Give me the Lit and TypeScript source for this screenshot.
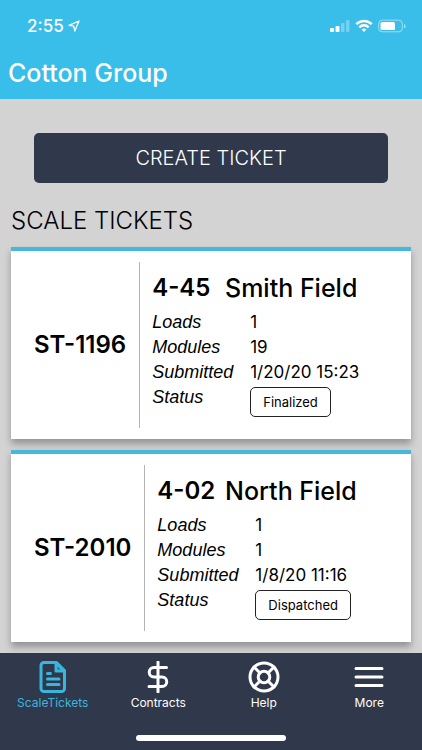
import { LitElement, html, svg, css } from "lit";
import { customElement, property } from "lit/decorators.js";
import { classMap } from "lit/directives/class-map.js";

interface Ticket {
  id: string;
  code: string;
  field: string;
  loads: number;
  modules: number;
  submitted: string;
  status: string;
}

const tickets: Ticket[] = [
  { id: "ST-1196", code: "4-45", field: "Smith Field", loads: 1, modules: 19, submitted: "1/20/20 15:23", status: "Finalized" },
  { id: "ST-2010", code: "4-02", field: "North Field", loads: 1, modules: 1, submitted: "1/8/20 11:16", status: "Dispatched" },
];

const icons = {
  tickets: svg`
    <path d="M7 1.5H19.5L27.5 9.5V27.5A3 3 0 0 1 24.500 30.500H7A3 3 0 0 1 4 27.500V4.500A3 3 0 0 1 7 1.500Z"/>
    <path d="M19 2V10H27Z" fill="currentColor" fill-opacity=".3"/>
    <path d="M10.500 12.500H13.500M10.500 18H22M10.500 23.500H22"/>`,
  contracts: svg`
    <path d="M16 1V31M24.500 6.500H12A4.750 4.750 0 0 0 12 16H20A4.750 4.750 0 0 1 20 25.500H7"/>`,
  help: svg`
    <circle cx="16" cy="16" r="14"/>
    <circle cx="16" cy="16" r="5.800"/>
    <path d="M6 6L12 12M26 6L20 12M6 26L12 20M26 26L20 20"/>`,
  more: svg`<path d="M3 7.500H29M3 16H29M3 24.500H29"/>`,
};

const tabs: { label: string; icon: keyof typeof icons; active: boolean }[] = [
  { label: "ScaleTickets", icon: "tickets", active: true },
  { label: "Contracts", icon: "contracts", active: false },
  { label: "Help", icon: "help", active: false },
  { label: "More", icon: "more", active: false },
];

@customElement("ticket-card")
export class TicketCard extends LitElement {
  @property({ attribute: false }) ticket!: Ticket;

  static styles = css`
    :host {
      display: block;
    }
    .card {
      display: flex;
      gap: 12px;
      box-sizing: border-box;
      padding: 11px 12px 11px 23px;
      border-top: 4px solid #45b8dc;
      background: #fff;
      box-shadow: 0 5px 7px rgba(0, 0, 0, 0.3);
      color: #000;
    }
    .id {
      display: flex;
      align-items: center;
      margin: 0;
      padding-right: 13px;
      border-right: 1px solid #b4b4b4;
      font-size: 24px;
      line-height: 32px;
      font-weight: 600;
    }
    .body {
      flex: 1;
      padding: 10px 0 11px;
    }
    .title {
      display: flex;
      justify-content: space-between;
      margin: 0 40px 6px 0;
      font-size: 24px;
      line-height: 32px;
      font-weight: 600;
    }
    .field {
      min-width: 134px;
      font-size: 25px;
      font-weight: 500;
    }
    .facts {
      display: grid;
      grid-template-columns: 98px 1fr;
      grid-template-rows: repeat(3, 25px) auto;
      margin: 0;
      font-size: 18px;
      line-height: 25px;
    }
    .facts dt {
      font-family: "Liberation Sans", sans-serif;
      font-style: italic;
    }
    .facts dd {
      margin: 0;
      font-size: 17px;
    }
    .facts .badge {
      display: block;
      box-sizing: border-box;
      width: fit-content;
      margin-top: 2px;
      padding: 0 12px;
      border: 1px solid #222;
      border-radius: 5px;
      font-size: 13px;
      line-height: 28px;
    }
  `;

  render() {
    const t = this.ticket;
    return html`
      <article class="card">
        <h3 class="id">${t.id}</h3>
        <div class="body">
          <h4 class="title"><span>${t.code}</span><span class="field">${t.field}</span></h4>
          <dl class="facts">
            <dt>Loads</dt><dd>${t.loads}</dd>
            <dt>Modules</dt><dd>${t.modules}</dd>
            <dt>Submitted</dt><dd>${t.submitted}</dd>
            <dt>Status</dt><dd><span class="badge">${t.status}</span></dd>
          </dl>
        </div>
      </article>
    `;
  }
}

@customElement("app-root")
export class AppRoot extends LitElement {
  static styles = css`
    :host {
      display: flex;
      flex-direction: column;
      height: 100vh;
      background: #d3d3d3;
      color: #000;
      font-family: Inter, "Liberation Sans", sans-serif;
    }
    .header {
      flex: none;
      padding-bottom: 4px;
      background: #38bee8;
      color: #fff;
    }
    .status {
      display: flex;
      align-items: center;
      justify-content: space-between;
      padding: 14px 16px 13px 27px;
      font-size: 17px;
      line-height: 24px;
      font-weight: 500;
    }
    .clock {
      display: flex;
      align-items: center;
      gap: 4px;
    }
    .signals {
      display: flex;
      align-items: center;
      gap: 5px;
    }
    .brand {
      margin: 0;
      padding: 6px 8px;
      font-size: 25px;
      line-height: 32px;
      font-weight: 500;
    }
    .content {
      flex: 1;
      min-height: 0;
      overflow: hidden auto;
      scrollbar-width: none;
      padding: 34px 11px 0;
    }
    .create {
      display: block;
      box-sizing: border-box;
      width: calc(100% - 46px);
      margin: 0 23px;
      padding: 10px;
      border: 0;
      border-radius: 5px;
      background: #30384b;
      color: #fff;
      font-family: inherit;
      font-size: 20px;
      line-height: 30px;
      font-weight: 300;
    }
    .section {
      margin: 22px 0 10px;
      font-size: 24px;
      line-height: 32px;
      font-weight: 300;
    }
    .list {
      display: flex;
      flex-direction: column;
      gap: 11px;
      padding-bottom: 11px;
    }
    .bar {
      flex: none;
      background: #30384b;
    }
    .tabs {
      display: flex;
      padding-top: 8px;
    }
    .tab {
      flex: 1;
      display: flex;
      flex-direction: column;
      align-items: center;
      color: #fff;
      font-size: 12px;
      line-height: 18px;
      text-decoration: none;
    }
    .tab.active {
      color: #38b6e0;
    }
    .icon {
      display: block;
      margin-bottom: 1px;
      fill: none;
      stroke: currentColor;
      stroke-width: 3;
      stroke-linecap: round;
      stroke-linejoin: round;
    }
    .home {
      width: 150px;
      height: 6px;
      margin: 23px auto 9px;
      border-radius: 3px;
      background: #fff;
    }
  `;

  render() {
    return html`
      <header class="header">
        <div class="status">
          <div class="clock">
            <span>2:55</span>
            <svg width="12" height="12" viewBox="0 0 12 12" fill="none" stroke="#fff" stroke-width="1.300" stroke-linejoin="round">
              <path d="M11 1L1 5.300L5.700 6.200L6.800 11Z" />
            </svg>
          </div>
          <div class="signals">
            <svg width="20" height="14" viewBox="0 0 20 14" fill="#fff">
              <rect x="0" y="9" width="4" height="4" rx="1" />
              <rect x="5.500" y="7" width="4" height="6" rx="1" />
              <rect x="11" y="4" width="3.500" height="9" rx="1" opacity=".3" />
              <rect x="16" y="1" width="3.500" height="12" rx="1" opacity=".3" />
            </svg>
            <svg width="18" height="14" viewBox="0 0 18 14" fill="none" stroke="#fff" stroke-width="2.500">
              <path d="M1.300 5.200A11 11 0 0 1 16.700 5.200" />
              <path d="M4.300 8.300A6.700 6.700 0 0 1 13.700 8.300" />
              <path d="M9 13L6.600 10.600A3.400 3.400 0 0 1 11.400 10.600Z" fill="#fff" stroke="none" />
            </svg>
            <svg width="28" height="14" viewBox="0 0 28 14" fill="none">
              <rect x=".7" y="1.200" width="23.600" height="11.600" rx="3.500" stroke="#fff" stroke-opacity=".5" />
              <rect x="2.500" y="3" width="14.500" height="8" rx="1.500" fill="#fff" />
              <path d="M26 5V9.500A2.400 2.400 0 0 0 26 5Z" fill="#fff" opacity=".5" />
            </svg>
          </div>
        </div>
        <h1 class="brand">Cotton Group</h1>
      </header>
      <main class="content">
        <button class="create" type="button">CREATE TICKET</button>
        <h2 class="section">SCALE TICKETS</h2>
        <div class="list">
          ${tickets.map((t) => html`<ticket-card .ticket=${t}></ticket-card>`)}
        </div>
      </main>
      <footer class="bar">
        <nav class="tabs">
          ${tabs.map(
            (t) => html`
              <a class=${classMap({ tab: true, active: t.active })} href="#${t.icon}">
                <svg class="icon" width="32" height="32" viewBox="0 0 32 32" aria-hidden="true">${icons[t.icon]}</svg>
                ${t.label}
              </a>
            `,
          )}
        </nav>
        <div class="home"></div>
      </footer>
    `;
  }
}
